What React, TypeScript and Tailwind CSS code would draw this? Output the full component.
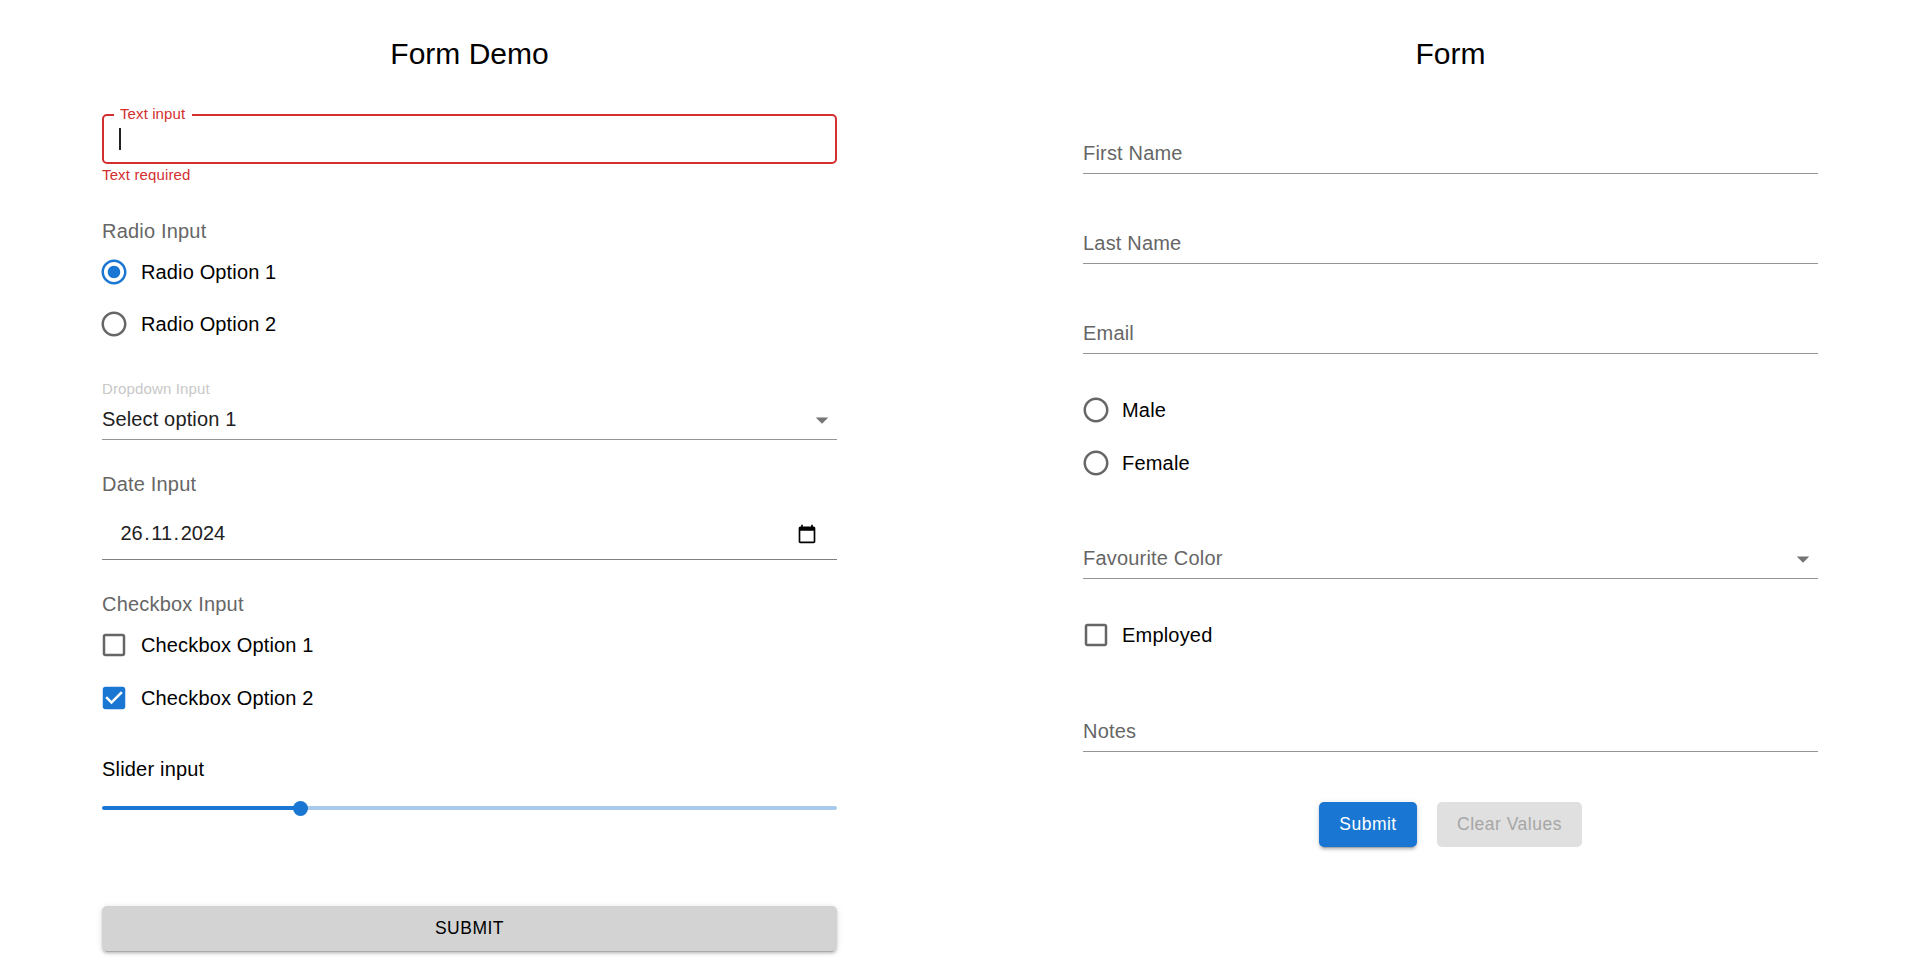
import { useState } from "react";
import type { ReactNode } from "react";

const PATHS = {
  radioOff:
    "M12 2C6.48 2 2 6.48 2 12s4.48 10 10 10 10-4.48 10-10S17.52 2 12 2zm0 18c-4.42 0-8-3.58-8-8s3.58-8 8-8 8 3.58 8 8-3.58 8-8 8z",
  radioDot:
    "M12 7c-2.76 0-5 2.24-5 5s2.24 5 5 5 5-2.24 5-5-2.24-5-5-5z",
  boxOff:
    "M19 5v14H5V5h14m0-2H5c-1.1 0-2 .9-2 2v14c0 1.1.9 2 2 2h14c1.1 0 2-.9 2-2V5c0-1.1-.9-2-2-2z",
  boxOn:
    "M19 3H5c-1.11 0-2 .9-2 2v14c0 1.1.89 2 2 2h14c1.11 0 2-.9 2-2V5c0-1.1-.89-2-2-2zm-9 14l-5-5 1.41-1.41L10 14.17l7.59-7.59L19 8l-9 9z",
  arrow: "M7 10l5 5 5-5z",
  calendar:
    "M20 3h-1V1h-2v2H7V1H5v2H4c-1.1 0-2 .9-2 2v16c0 1.1.9 2 2 2h16c1.1 0 2-.9 2-2V5c0-1.1-.9-2-2-2zm0 18H4V8h16v13z",
};

function Icon({ d, className }: { d: string; className: string }) {
  return (
    <svg viewBox="0 0 24 24" fill="currentColor" className={className} aria-hidden="true">
      <path d={d} />
    </svg>
  );
}

function Choice({
  kind,
  checked,
  label,
  className,
  onClick,
}: {
  kind: "radio" | "checkbox";
  checked: boolean;
  label: string;
  className: string;
  onClick: () => void;
}) {
  const d =
    kind === "radio"
      ? checked
        ? PATHS.radioOff + PATHS.radioDot
        : PATHS.radioOff
      : checked
        ? PATHS.boxOn
        : PATHS.boxOff;
  return (
    <div
      role={kind}
      aria-checked={checked}
      onClick={onClick}
      className={`flex h-[30px] cursor-pointer items-center ${className}`}
    >
      <Icon d={d} className={checked ? "size-[30px] text-[#1976d2]" : "size-[30px] text-[#666]"} />
      <span>{label}</span>
    </div>
  );
}

function GroupLabel({ children, className }: { children: ReactNode; className: string }) {
  return <div className={`text-[#666] ${className}`}>{children}</div>;
}

function LineField({ label, className, select }: { label: string; className: string; select?: boolean }) {
  return (
    <div className={`flex h-9 items-start justify-between border-b border-[#949494] text-[#666] ${className}`}>
      <span>{label}</span>
      {select && <Icon d={PATHS.arrow} className="mt-px size-[30px] text-[#757575]" />}
    </div>
  );
}

const SHADOW =
  "shadow-[0px_4px_1px_-3px_rgba(0,0,0,0.2),0px_2.5px_2.5px_0px_rgba(0,0,0,0.14),0px_1px_6px_0px_rgba(0,0,0,0.12)]";

function DemoForm() {
  const [radio, setRadio] = useState(1);
  const [boxes, setBoxes] = useState([false, true]);
  const toggle = (i: number) => setBoxes(boxes.map((b, k) => (k === i ? !b : b)));
  const slider = 27;

  return (
    <section className="flex w-[735px] flex-col">
      <h1 className="text-center text-[30px] leading-10 tracking-normal">Form Demo</h1>

      <div className="relative mt-10 flex h-[50px] items-center rounded-[5px] border-2 border-[#d32f2f] pl-[15px]">
        <span className="absolute -top-[12px] left-[10px] w-[78px] bg-white pl-[6px] text-[15px] leading-5 tracking-[0.1px] whitespace-nowrap text-[#d32f2f]">
          Text input
        </span>
        <span className="h-[22px] w-[2px] bg-[#212121]" />
      </div>
      <p className="mt-px text-[15px] leading-5 tracking-[0.14px] text-[#d32f2f]">Text required</p>

      <GroupLabel className="mt-[31px]">Radio Input</GroupLabel>
      <Choice kind="radio" checked={radio === 1} label="Radio Option 1" className="mt-[11px] -ml-[3px] gap-3 tracking-[0.14px]" onClick={() => setRadio(1)} />
      <Choice kind="radio" checked={radio === 2} label="Radio Option 2" className="mt-[22px] -ml-[3px] gap-3 tracking-[0.14px]" onClick={() => setRadio(2)} />

      <div className="mt-10 text-[15px] leading-5 tracking-[0.14px] text-[#c8c8c8]">Dropdown Input</div>
      <div className="mt-[5px] flex h-9 items-start justify-between border-b border-[#949494] tracking-[0.14px] text-[#212121]">
        <span>Select option 1</span>
        <Icon d={PATHS.arrow} className="mt-px size-[30px] text-[#757575]" />
      </div>

      <GroupLabel className="mt-[29px]">Date Input</GroupLabel>
      <div className="mt-[19px] flex h-[42px] items-start justify-between border-b border-[#808080] pr-5 pl-[18.5px] text-[#212121]">
        <span className="flex tracking-normal">
          <span>26</span>
          <span className="px-[1.5px]">.</span>
          <span>11</span>
          <span className="px-[1.5px]">.</span>
          <span>2024</span>
        </span>
        <Icon d={PATHS.calendar} className="mt-[5.5px] size-5 text-black" />
      </div>

      <GroupLabel className="mt-[29px]">Checkbox Input</GroupLabel>
      <Choice kind="checkbox" checked={boxes[0]} label="Checkbox Option 1" className="mt-[11px] -ml-[3px] gap-3 tracking-[0.14px]" onClick={() => toggle(0)} />
      <Choice kind="checkbox" checked={boxes[1]} label="Checkbox Option 2" className="mt-[23px] -ml-[3px] gap-3 tracking-[0.14px]" onClick={() => toggle(1)} />

      <div className="mt-[41px]">Slider input</div>
      <div className="mt-4 flex h-4 items-center">
        <div className="h-1 rounded-l-full bg-[#1976d2]" style={{ width: `${slider}%` }} />
        <div className="z-10 -mr-[7.5px] -ml-[7.5px] size-[15px] rounded-full bg-[#1976d2]" />
        <div className="h-1 flex-1 rounded-r-full bg-[#a7caed]" />
      </div>

      <button
        className={`mt-[90px] flex h-[45px] items-start justify-center rounded-[5px] bg-[#d3d3d3] pt-2 text-[17.5px] leading-[29px] tracking-[0.5px] uppercase ${SHADOW}`}
      >
        Submit
      </button>
    </section>
  );
}

function BasicForm() {
  const [gender, setGender] = useState("");
  const [employed, setEmployed] = useState(false);

  return (
    <section className="flex w-[735px] flex-col">
      <h1 className="text-center text-[30px] leading-10 tracking-normal">Form</h1>
      <LineField label="First Name" className="mt-16" />
      <LineField label="Last Name" className="mt-[54px]" />
      <LineField label="Email" className="mt-[54px]" />
      <Choice kind="radio" checked={gender === "m"} label="Male" className="mt-[41px] -ml-[2px] gap-[11px]" onClick={() => setGender("m")} />
      <Choice kind="radio" checked={gender === "f"} label="Female" className="mt-[23px] -ml-[2px] gap-[11px]" onClick={() => setGender("f")} />
      <LineField label="Favourite Color" className="mt-[65px]" select />
      <Choice
        kind="checkbox"
        checked={employed}
        label="Employed"
        className="mt-[41px] -ml-[2px] gap-[11px]"
        onClick={() => setEmployed(!employed)}
      />
      <LineField label="Notes" className="mt-[66px]" />
      <div className="mt-[50px] flex justify-center gap-5">
        <button
          className={`flex h-[45px] w-[98px] items-start justify-center rounded-[5px] bg-[#1976d2] pt-2 text-[17.5px] leading-[29px] tracking-[0.5px] text-white ${SHADOW}`}
        >
          Submit
        </button>
        <button
          disabled
          className="flex h-[45px] w-[145px] items-start justify-center rounded-[5px] bg-[#e0e0e0] pt-2 text-[17.5px] leading-[29px] tracking-[0.5px] whitespace-nowrap text-[#a6a6a6]"
        >
          Clear Values
        </button>
      </div>
    </section>
  );
}

export default function App() {
  return (
    <main className="flex h-[965px] items-start gap-[246px] overflow-hidden bg-white pt-[34px] pl-[102px] font-['Liberation_Sans',Arial,sans-serif] text-[20px] leading-[30px] tracking-[0.19px] text-black">
      <DemoForm />
      <BasicForm />
    </main>
  );
}
